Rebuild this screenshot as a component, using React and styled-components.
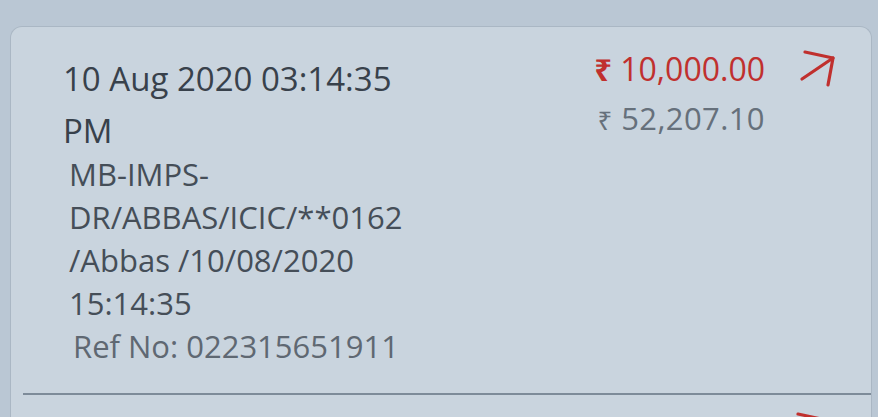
import styled, { createGlobalStyle } from 'styled-components';

const GlobalStyle = createGlobalStyle`
    html, body { margin: 0; padding: 0; }
    body {
        background: #bac7d4;
        font-family: "Open Sans", "Noto Sans", "DejaVu Sans", sans-serif;
        overflow: hidden;
    }
`;

const txn = {
    date: '10 Aug 2020 03:14:35 PM',
    desc: ['MB-IMPS-', 'DR/ABBAS/ICIC/**0162', '/Abbas /10/08/2020', '15:14:35'],
    ref: '022315651911',
    amount: '10,000.00',
    balance: '52,207.10'
};

function Arrow({ color = '#c0302e' }) {
    return (
        <svg width="42" height="42" viewBox="0 0 42 42" fill="none" stroke={color} strokeWidth="3.2" strokeLinecap="round" strokeLinejoin="round">
            <path d="M7 5 L35 11 L30 38" />
            <path d="M35 11 L4 32" />
        </svg>
    );
}

function App() {
    return (
        <>
            <GlobalStyle />
            <Card>
                <Row>
                    <Details>
                        <DateText>{txn.date}</DateText>
                        <Desc>
                            {txn.desc.map((line, i) => <div key={i}>{line}</div>)}
                        </Desc>
                        <Ref>Ref No: {txn.ref}</Ref>
                    </Details>
                    <Amounts>
                        <Debit><span className="rs">₹</span> {txn.amount}</Debit>
                        <Balance><span className="rs">₹</span> {txn.balance}</Balance>
                    </Amounts>
                    <ArrowBox><Arrow /></ArrowBox>
                </Row>
                <NextRow>
                    <ArrowBox><Arrow /></ArrowBox>
                </NextRow>
            </Card>
        </>
    );
}

const Card = styled.div`
    margin: 26px 6px 0 10px;
    background: #c9d4de;
    border: 1px solid #aab7c4;
    border-bottom: none;
    border-radius: 12px 12px 0 0;
    height: 420px;
`;

const Row = styled.div`
    display: flex;
    align-items: flex-start;
    margin-left: 12px;
    padding: 26px 0 0 40px;
    height: 340px;
    border-bottom: 2px solid #7d8b99;
`;

const Details = styled.div`
    width: 420px;
    display: flex;
    flex-direction: column;
`;

const DateText = styled.div`
    font-size: 33px;
    line-height: 52px;
    color: #38414b;
    width: 370px;
`;

const Desc = styled.div`
    margin-top: -4px;
    font-size: 31px;
    line-height: 43px;
    color: #454e58;
    padding-left: 6px;
`;

const Ref = styled.div`
    font-size: 31px;
    line-height: 43px;
    color: #5f6872;
    padding-left: 10px;
`;

const Amounts = styled.div`
    margin-left: 82px;
    width: 200px;
    display: flex;
    flex-direction: column;
    align-items: flex-end;
`;

const Debit = styled.div`
    margin-top: -6px;
    font-size: 32px;
    line-height: 44px;
    font-weight: 500;
    color: #c0302e;
    .rs { font-weight: 700; font-size: 31px; }
`;

const Balance = styled.div`
    font-size: 31px;
    line-height: 54px;
    letter-spacing: 0.4px;
    color: #66707b;
    .rs { font-size: 26px; }
`;

const ArrowBox = styled.div`
    margin-left: 33px;
    margin-top: -6px;
    line-height: 0;
`;

const NextRow = styled.div`
    display: flex;
    justify-content: flex-end;
    padding: 20px 38px 0 0;
`;

export default App;
